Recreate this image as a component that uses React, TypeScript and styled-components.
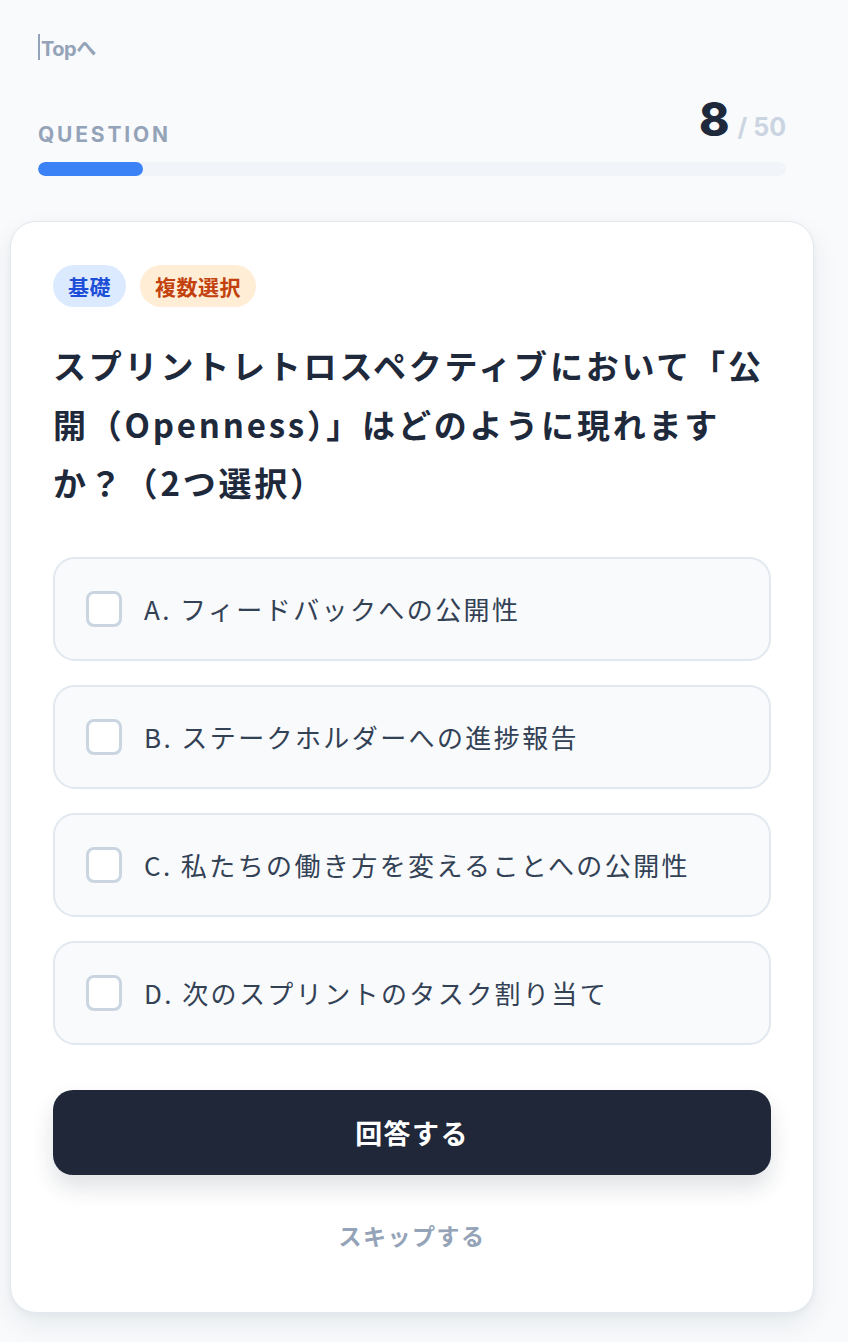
import React from "react";
import styled, { createGlobalStyle } from "styled-components";

const GlobalStyle = createGlobalStyle`
  html, body {
    margin: 0;
    padding: 0;
    background: #f8fafc;
  }
  body {
    font-family: "Inter", "Noto Sans CJK JP", sans-serif;
    color: #1e293b;
    -webkit-font-smoothing: antialiased;
  }
  * { box-sizing: border-box; }
`;

const Page = styled.div`
  padding: 34px 34px 30px 10px;
`;

const Header = styled.header`
  padding: 0 28px;
  display: flex;
  flex-direction: column;
`;

const TopLink = styled.a`
  align-self: flex-start;
  display: inline-flex;
  align-items: center;
  height: 26px;
  font-family: "Inter", "Noto Sans CJK JP", sans-serif;
  font-size: 20px;
  font-weight: 700;
  color: #94a3b8;
  text-decoration: none;
  border-left: 2px solid #94a3b8;
  padding-left: 1px;
  letter-spacing: -0.5px;
`;

const ScoreRow = styled.div`
  margin-top: 36px;
  display: flex;
  justify-content: space-between;
  align-items: flex-end;
`;

const Label = styled.div`
  font-family: "Inter", sans-serif;
  font-size: 21px;
  line-height: 21px;
  font-weight: 700;
  letter-spacing: 2.8px;
  color: #94a3b8;
  margin-bottom: -3px;
`;

const Count = styled.div`
  display: flex;
  align-items: baseline;
  gap: 8px;
`;

const Current = styled.span`
  font-family: "Inter", sans-serif;
  font-size: 46px;
  line-height: 46px;
  font-weight: 800;
  color: #1e293b;
`;

const Total = styled.span`
  font-family: "Inter", sans-serif;
  font-size: 25px;
  font-weight: 700;
  color: #cbd5e1;
`;

const Track = styled.div`
  margin-top: 20px;
  height: 14px;
  border-radius: 7px;
  background: #f1f5f9;
  overflow: hidden;
`;

const Fill = styled.div`
  height: 100%;
  border-radius: 7px;
  background: #3b82f6;
`;

const Card = styled.section`
  margin-top: 45px;
  background: #ffffff;
  border: 1px solid #e2e8f0;
  border-radius: 26px;
  padding: 43px 42px 59px;
  box-shadow: 0 12px 28px rgba(15, 23, 42, 0.07), 0 2px 6px rgba(15, 23, 42, 0.04);
`;

const Badges = styled.div`
  display: flex;
  gap: 14px;
`;

const Badge = styled.span<{ $tone: "blue" | "orange" }>`
  display: inline-flex;
  align-items: center;
  height: 42px;
  padding: 0 15px;
  border-radius: 21px;
  font-family: "Noto Sans CJK JP", sans-serif;
  font-size: 21px;
  font-weight: 700;
  letter-spacing: 0.5px;
  background: ${(p) => (p.$tone === "blue" ? "#dbeafe" : "#ffedd5")};
  color: ${(p) => (p.$tone === "blue" ? "#1d4ed8" : "#c2410c")};
`;

const Title = styled.h1`
  margin: 29px 0 0;
  font-family: "Noto Sans CJK JP", sans-serif;
  font-size: 33px;
  line-height: 58.5px;
  font-weight: 700;
  letter-spacing: 2.8px;
  color: #1e293b;
`;

const Options = styled.div`
  margin-top: 45px;
  display: flex;
  flex-direction: column;
  gap: 24px;
`;

const Option = styled.label`
  display: flex;
  align-items: center;
  gap: 22px;
  height: 104px;
  padding: 0 31px;
  border: 2.5px solid #e2e8f0;
  border-radius: 22px;
  background: #f8fafc;
  cursor: pointer;
`;

const Box = styled.span`
  flex: none;
  width: 36px;
  height: 36px;
  border: 3px solid #cbd5e1;
  border-radius: 8px;
  background: #ffffff;
`;

const OptionText = styled.span`
  font-family: "Noto Sans CJK JP", sans-serif;
  font-size: 26px;
  font-weight: 400;
  letter-spacing: 2.4px;
  color: #334155;
`;

const Submit = styled.button`
  margin-top: 45px;
  width: 100%;
  height: 85px;
  border: none;
  border-radius: 20px;
  background: #1f2739;
  color: #ffffff;
  font-family: "Noto Sans CJK JP", sans-serif;
  font-size: 27px;
  font-weight: 700;
  letter-spacing: 1.4px;
  box-shadow: 0 12px 22px rgba(30, 41, 59, 0.14);
  cursor: pointer;
`;

const Skip = styled.button`
  display: block;
  margin: 42px auto 0;
  padding: 0;
  border: none;
  background: none;
  font-family: "Noto Sans CJK JP", sans-serif;
  font-size: 23px;
  line-height: 36px;
  font-weight: 700;
  letter-spacing: 1.5px;
  color: #94a3b8;
  cursor: pointer;
`;

const options = [
  "A. フィードバックへの公開性",
  "B. ステークホルダーへの進捗報告",
  "C. 私たちの働き方を変えることへの公開性",
  "D. 次のスプリントのタスク割り当て",
];

export default function App() {
  const answered = 7;
  const total = 50;
  return (
    <>
      <GlobalStyle />
      <Page>
        <Header>
          <TopLink href="#">Topへ</TopLink>
          <ScoreRow>
            <Label>QUESTION</Label>
            <Count>
              <Current>8</Current>
              <Total>/ {total}</Total>
            </Count>
          </ScoreRow>
          <Track>
            <Fill style={{ width: `${(answered / total) * 100}%` }} />
          </Track>
        </Header>
        <Card>
          <Badges>
            <Badge $tone="blue">基礎</Badge>
            <Badge $tone="orange">複数選択</Badge>
          </Badges>
          <Title>
            スプリントレトロスペクティブにおいて「公開（Openness）」はどのように現れますか？（2つ選択）
          </Title>
          <Options>
            {options.map((o) => (
              <Option key={o}>
                <Box />
                <OptionText>{o}</OptionText>
              </Option>
            ))}
          </Options>
          <Submit>回答する</Submit>
          <Skip>スキップする</Skip>
        </Card>
      </Page>
    </>
  );
}
